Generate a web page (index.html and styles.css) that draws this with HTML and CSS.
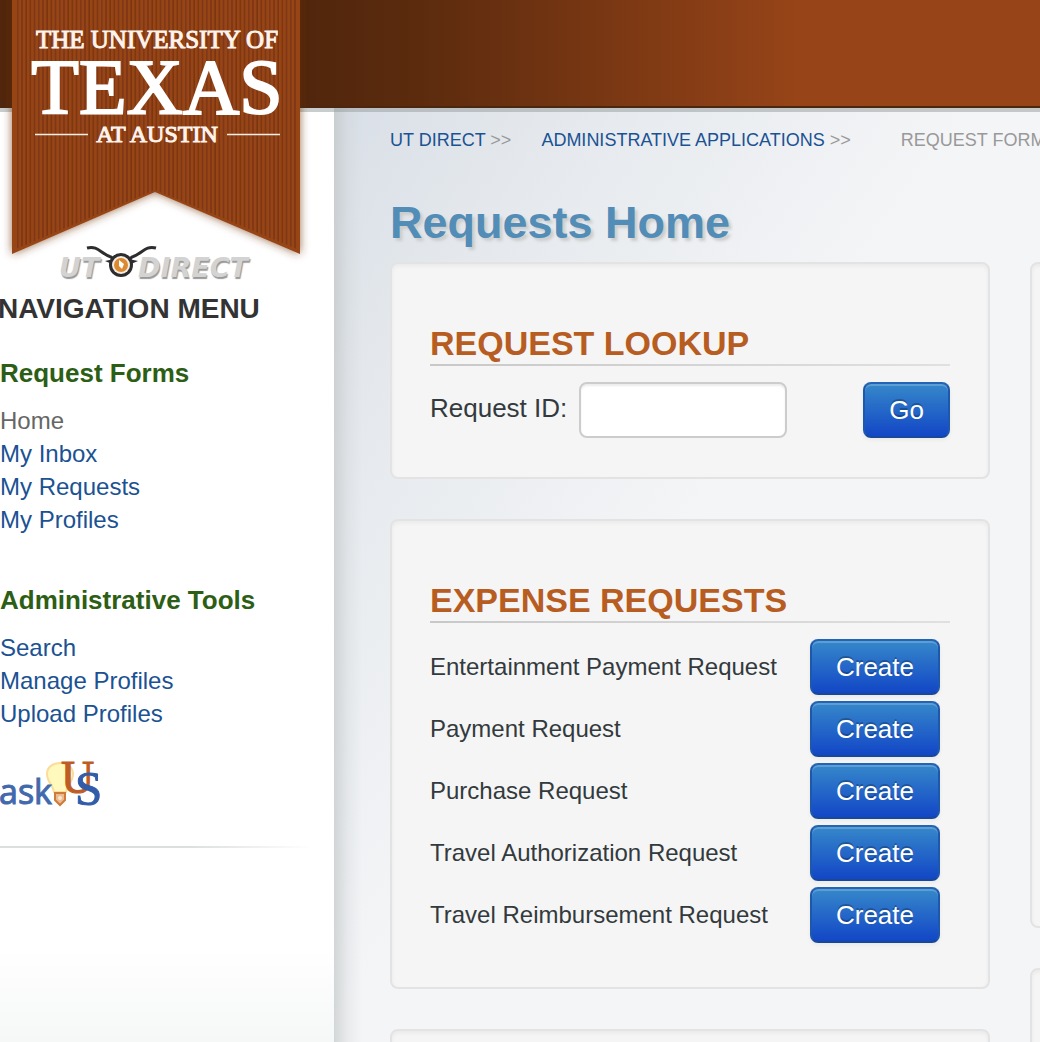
FILE: index.html
```
<!DOCTYPE html>
<html lang="en">

<head>
    <meta charset="UTF-8">
    <meta name="viewport" content="width=device-width, initial-scale=1.0">
    <title>Requests Home</title>
    <link rel="stylesheet" href="styles.css">
</head>

<body>
    <!-- Header -->
    <header class="header">
        <a class="ut-logo" href="#" aria-label="The University of Texas at Austin">
            <svg width="320" height="270" viewBox="0 0 320 270">
                <defs>
                    <pattern id="stripes" x="16" width="4.200" height="8" patternUnits="userSpaceOnUse">
                        <rect width="5" height="8" fill="#984519" />
                        <rect x="1" width="1.600" height="8" fill="#7c3611" />
                    </pattern>
                    <filter id="ribbon-shadow" x="-10%" y="-10%" width="120%" height="120%">
                        <feDropShadow dx="0" dy="0" stdDeviation="5" flood-color="#6b2d0c" flood-opacity="0.7" />
                    </filter>
                </defs>
                <g filter="url(#ribbon-shadow)">
                    <path d="M12 -20H300V254L155 192L12 254Z" fill="#984519" />
                    <path d="M16 -20H297V249L155 190L16 249Z" fill="url(#stripes)" />
                </g>
                <g class="ut-logo-text" text-anchor="middle">
                    <text x="157" y="48" font-size="25">THE UNIVERSITY OF</text>
                    <text class="texas" x="157" y="113" font-size="78">TEXAS</text>
                    <text x="157" y="142" font-size="24">AT AUSTIN</text>
                </g>
                <path d="M35 134.500H88M227 134.500H280" stroke="#fbeee5" stroke-width="1.500" />
            </svg>
        </a>
    </header>

    <div class="page">
        <!-- Sidebar -->
        <nav class="sidebar">
            <a class="ut-direct" href="#" aria-label="UT Direct">
                <svg width="220" height="38" viewBox="0 0 220 38">
                    <g class="ut-direct-text">
                        <text x="3" y="33" font-size="27">UT</text>
                        <text x="82" y="33" font-size="27">DIRECT</text>
                    </g>
                    <path d="M31 4C42 1 45 10 55 13L60 17M100 4C89 1 86 10 76 13L71 17" fill="none" stroke="#2d2d30" stroke-width="3" />
                    <path d="M49 17L58 15L56 20ZM82 17L73 15L75 20Z" fill="#2d2d30" />
                    <circle cx="65" cy="21" r="12" fill="#2d2d30" />
                    <circle cx="65" cy="21" r="9" fill="#f5ede4" />
                    <circle cx="65" cy="21" r="7" fill="#dc8930" />
                    <path d="M63 16L68 20L66 25L63 22Z" fill="#fff" />
                </svg>
            </a>
            <h2>NAVIGATION MENU</h2>
            <h3>Request Forms</h3>
            <ul>
                <li class="current">Home</li>
                <li><a href="#">My Inbox</a></li>
                <li><a href="#">My Requests</a></li>
                <li><a href="#">My Profiles</a></li>
            </ul>
            <h3>Administrative Tools</h3>
            <ul>
                <li><a href="#">Search</a></li>
                <li><a href="#">Manage Profiles</a></li>
                <li><a href="#">Upload Profiles</a></li>
            </ul>
            <a class="ask-us" href="#" aria-label="Ask Us">
                <svg width="104" height="46" viewBox="0 0 104 46">
                    <path d="M54 30C53 23 47 20 47 12C47 5 53 1 60 1C68 1 73 6 73 12C73 20 67 23 66 30Z" fill="#fff9bd" stroke="#fbdc9b" stroke-width="2" />
                    <path d="M55 31H65V38L60 43L55 38Z" fill="#eabb91" stroke="#cf7a3c" stroke-width="2" />
                    <circle cx="60" cy="36" r="2" fill="#f7e7c8" />
                    <text class="ask" x="-1" y="42" font-size="34">ask</text>
                    <text class="big-u" x="61" y="31" font-size="46">U</text>
                    <text class="big-s" x="75" y="43" font-size="49">S</text>
                </svg>
            </a>
            <hr>
        </nav>

        <!-- Content -->
        <main class="content">
            <div class="breadcrumbs">
                <span><a href="#">UT DIRECT</a> &gt;&gt;</span>
                <span><a href="#">ADMINISTRATIVE APPLICATIONS</a> &gt;&gt;</span>
                <span class="here">REQUEST FORMS</span>
            </div>
            <h1>Requests Home</h1>

            <div class="columns">
                <div class="column">
                    <section class="well">
                        <h2>REQUEST LOOKUP</h2>
                        <form class="lookup">
                            <label for="request-id">Request ID:</label>
                            <input type="text" id="request-id">
                            <button type="button" class="btn">Go</button>
                        </form>
                    </section>

                    <section class="well">
                        <h2>EXPENSE REQUESTS</h2>
                        <ul class="requests">
                            <li><span>Entertainment Payment Request</span><button type="button" class="btn">Create</button></li>
                            <li><span>Payment Request</span><button type="button" class="btn">Create</button></li>
                            <li><span>Purchase Request</span><button type="button" class="btn">Create</button></li>
                            <li><span>Travel Authorization Request</span><button type="button" class="btn">Create</button></li>
                            <li><span>Travel Reimbursement Request</span><button type="button" class="btn">Create</button></li>
                        </ul>
                    </section>

                    <section class="well"></section>
                </div>

                <div class="column">
                    <section class="well tall"></section>
                    <section class="well"></section>
                </div>
            </div>
        </main>
    </div>
</body>

</html>
```
FILE: styles.css
```
* {
    margin: 0;
    padding: 0;
    box-sizing: border-box;
}

body {
    font-family: "Liberation Sans", Arial, sans-serif;
    font-size: 24px;
    color: #333a3d;
    height: 100vh;
    overflow: hidden;
    display: flex;
    flex-direction: column;
}

a {
    color: #1b5293;
    text-decoration: none;
}

ul {
    list-style: none;
}

/* Header */
.header {
    position: relative;
    z-index: 2;
    flex: none;
    height: 108px;
    background: linear-gradient(90deg, #50260c 300px, #5c2b0e 420px, #974418 800px);
    border-bottom: 2px solid #4b270f;
    box-shadow: 0 4px 0 rgba(150, 155, 155, 0.5);
}

/* the ribbon hangs over the sidebar */
.ut-logo {
    position: absolute;
    top: 0;
    left: 0;
}

.ut-logo svg,
.ut-direct svg,
.ask-us svg {
    display: block;
    overflow: visible;
}

.ut-logo-text {
    font-family: "Liberation Serif", serif;
    fill: #fff4ec;
    stroke: #fff4ec;
    stroke-width: 1px;
}

.ut-logo-text .texas {
    fill: #fff;
    stroke: #fff;
    stroke-width: 2px;
}

.page {
    flex: 1;
    min-height: 0;
    display: flex;
}

/* Sidebar */
.sidebar {
    flex: none;
    width: 334px;
    padding-top: 136px;
    background: linear-gradient(#fff 840px, #f6f7f7);
}

.ut-direct {
    display: block;
    margin-left: 56px;
}

.ut-direct-text {
    font-family: "DejaVu Sans", sans-serif;
    font-weight: bold;
    font-style: italic;
    fill: #d3d3d3;
    text-shadow: 1px 2px 1px #999;
}

.sidebar h2 {
    margin: 7px 0 28px -2px;
    font-size: 28px;
    line-height: 40px;
    color: #333;
}

.sidebar h3 {
    margin-bottom: 15px;
    font-size: 26px;
    line-height: 32px;
    color: #2d5e15;
}

.sidebar ul {
    margin-bottom: 48px;
    line-height: 33px;
}

.sidebar .current {
    color: #666;
}

.ask-us {
    display: block;
    margin-top: -16px;
}

.ask {
    font-family: "Open Sans", sans-serif;
    fill: #4269ac;
    stroke: #4269ac;
}

.big-u,
.big-s {
    font-family: "Liberation Serif", serif;
}

.big-u {
    fill: #bd5c24;
    stroke: #bd5c24;
}

.big-s {
    fill: #315ca8;
    stroke: #315ca8;
}

.sidebar hr {
    height: 2px;
    margin: 38px 20px 0 0;
    border: none;
    background: linear-gradient(90deg, #dcdfdf 60%, #fff);
}

/* Content */
.content {
    flex: 1;
    min-width: 0;
    overflow: hidden;
    padding: 20px 0 0 56px;
    background:
        linear-gradient(90deg, rgba(190, 194, 194, 0.6), rgba(200, 205, 208, 0.25) 14px, transparent 28px),
        linear-gradient(125deg, #d9dfe7, #e5e9ed 200px, #f4f5f7 530px);
}

.breadcrumbs {
    display: flex;
    gap: 30px;
    font-size: 18px;
    line-height: 24px;
    white-space: nowrap;
    color: #999;
}

.breadcrumbs .here {
    margin-left: 20px;
}

h1 {
    margin: 43px 0 11px;
    font-size: 45px;
    line-height: 56px;
    color: #528db8;
    text-shadow: 3px 3px 3px #ccc;
}

.columns {
    display: grid;
    grid-template-columns: repeat(2, 600px);
    gap: 40px;
}

.column {
    display: flex;
    flex-direction: column;
    gap: 40px;
}

.well {
    min-height: 217px;
    padding: 60px 38px 38px;
    background: #f5f5f5;
    border: 2px solid #e3e3e3;
    border-radius: 8px;
    box-shadow: inset 0 2px 4px rgba(0, 0, 0, 0.05);
}

.well.tall {
    min-height: 666px;
}

.well h2 {
    margin-bottom: 16px;
    padding-bottom: 4px;
    font-size: 34px;
    line-height: 38px;
    color: #b85d22;
    background: linear-gradient(90deg, #c8c8c8, #e0e0e0) bottom / 100% 2px no-repeat;
}

.lookup {
    display: flex;
}

.lookup label {
    margin-right: 12px;
    font-size: 26px;
    line-height: 52px;
}

.lookup input {
    width: 208px;
    height: 56px;
    padding: 8px 12px;
    font: inherit;
    color: #555;
    background: #fff;
    border: 2px solid #ccc;
    border-radius: 8px;
    box-shadow: inset 0 2px 2px rgba(0, 0, 0, 0.075);
}

.lookup .btn {
    margin-left: auto;
}

.btn {
    height: 56px;
    padding: 0 24px;
    font-family: inherit;
    font-size: 26px;
    color: #fff;
    text-shadow: 0 -2px 0 rgba(0, 0, 0, 0.25);
    background: linear-gradient(#378aca, #1144c6) border-box;
    border: 2px solid;
    border-color: #2464b5 #1e58ad #174899;
    border-radius: 8px;
    box-shadow: inset 0 2px 0 rgba(255, 255, 255, 0.2), 0 2px 4px rgba(0, 0, 0, 0.05);
    cursor: pointer;
}

.requests li {
    display: flex;
    justify-content: space-between;
    align-items: center;
    margin-bottom: 6px;
    padding-right: 10px;
}
```
